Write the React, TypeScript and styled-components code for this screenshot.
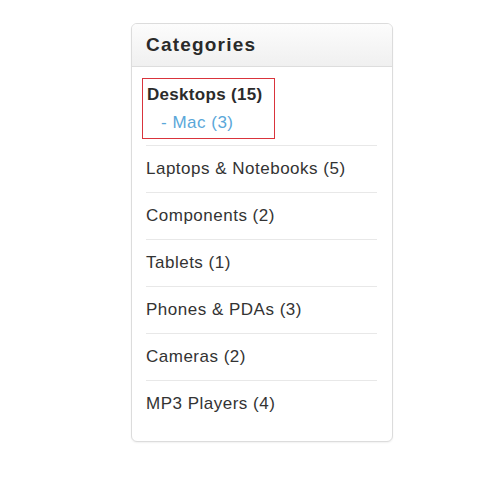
import React from "react";
import styled, { createGlobalStyle } from "styled-components";

interface Category {
  name: string;
  count: number;
}

const categories: Category[] = [
  { name: "Laptops & Notebooks", count: 5 },
  { name: "Components", count: 2 },
  { name: "Tablets", count: 1 },
  { name: "Phones & PDAs", count: 3 },
  { name: "Cameras", count: 2 },
  { name: "MP3 Players", count: 4 },
];

const App: React.FC = () => {
  return (
    <Page>
      <GlobalStyle />
      <Panel>
        <Header>Categories</Header>
        <List>
          <Item>
            <Highlight>
              <ParentLink>Desktops (15)</ParentLink>
              <ChildLink>- Mac (3)</ChildLink>
            </Highlight>
          </Item>
          {categories.map((c) => (
            <Item key={c.name}>
              <Link>
                {c.name} ({c.count})
              </Link>
            </Item>
          ))}
        </List>
      </Panel>
    </Page>
  );
};

const GlobalStyle = createGlobalStyle`
  html, body {
    margin: 0;
    padding: 0;
    background: #fff;
  }
  body {
    font-family: "Liberation Sans", Arial, sans-serif;
  }
`;

const Page = styled.div`
  width: 500px;
  height: 500px;
  padding: 23px 0 0 131px;
  box-sizing: border-box;
`;

const Panel = styled.div`
  width: 262px;
  box-sizing: border-box;
  border: 1px solid #dcdcdc;
  border-radius: 6px;
  box-shadow: 0 1px 2px rgba(0, 0, 0, 0.06);
  overflow: hidden;
  background: #fff;
`;

const Header = styled.div`
  height: 42px;
  display: flex;
  align-items: center;
  padding: 0 14px;
  font-size: 19px;
  font-weight: bold;
  letter-spacing: 1.2px;
  color: #2a2a2a;
  background: linear-gradient(#fcfcfc, #f0f0f0);
  border-bottom: 1px solid #dddddd;
`;

const List = styled.ul`
  list-style: none;
  margin: 0;
  padding: 11px 15px 14px 14px;
`;

const Item = styled.li`
  padding: 12px 0;
  border-top: 1px solid #e8e8e8;
  font-size: 17px;
  letter-spacing: 0.5px;
  line-height: 22px;

  &:first-child {
    border-top: none;
    padding: 0 0 6px;
  }
`;

const Highlight = styled.div`
  display: inline-flex;
  flex-direction: column;
  align-items: flex-start;
  margin-left: -4px;
  padding: 5px 12px 4px 4px;
  border: 1px solid #d9343c;
`;

const ParentLink = styled.span`
  font-weight: bold;
  letter-spacing: 0.3px;
  color: #2b2b2b;
`;

const ChildLink = styled.span`
  margin-top: 6px;
  padding-left: 14px;
  color: #5aa7d9;
`;

const Link = styled.span`
  color: #333;
`;

export default App;
